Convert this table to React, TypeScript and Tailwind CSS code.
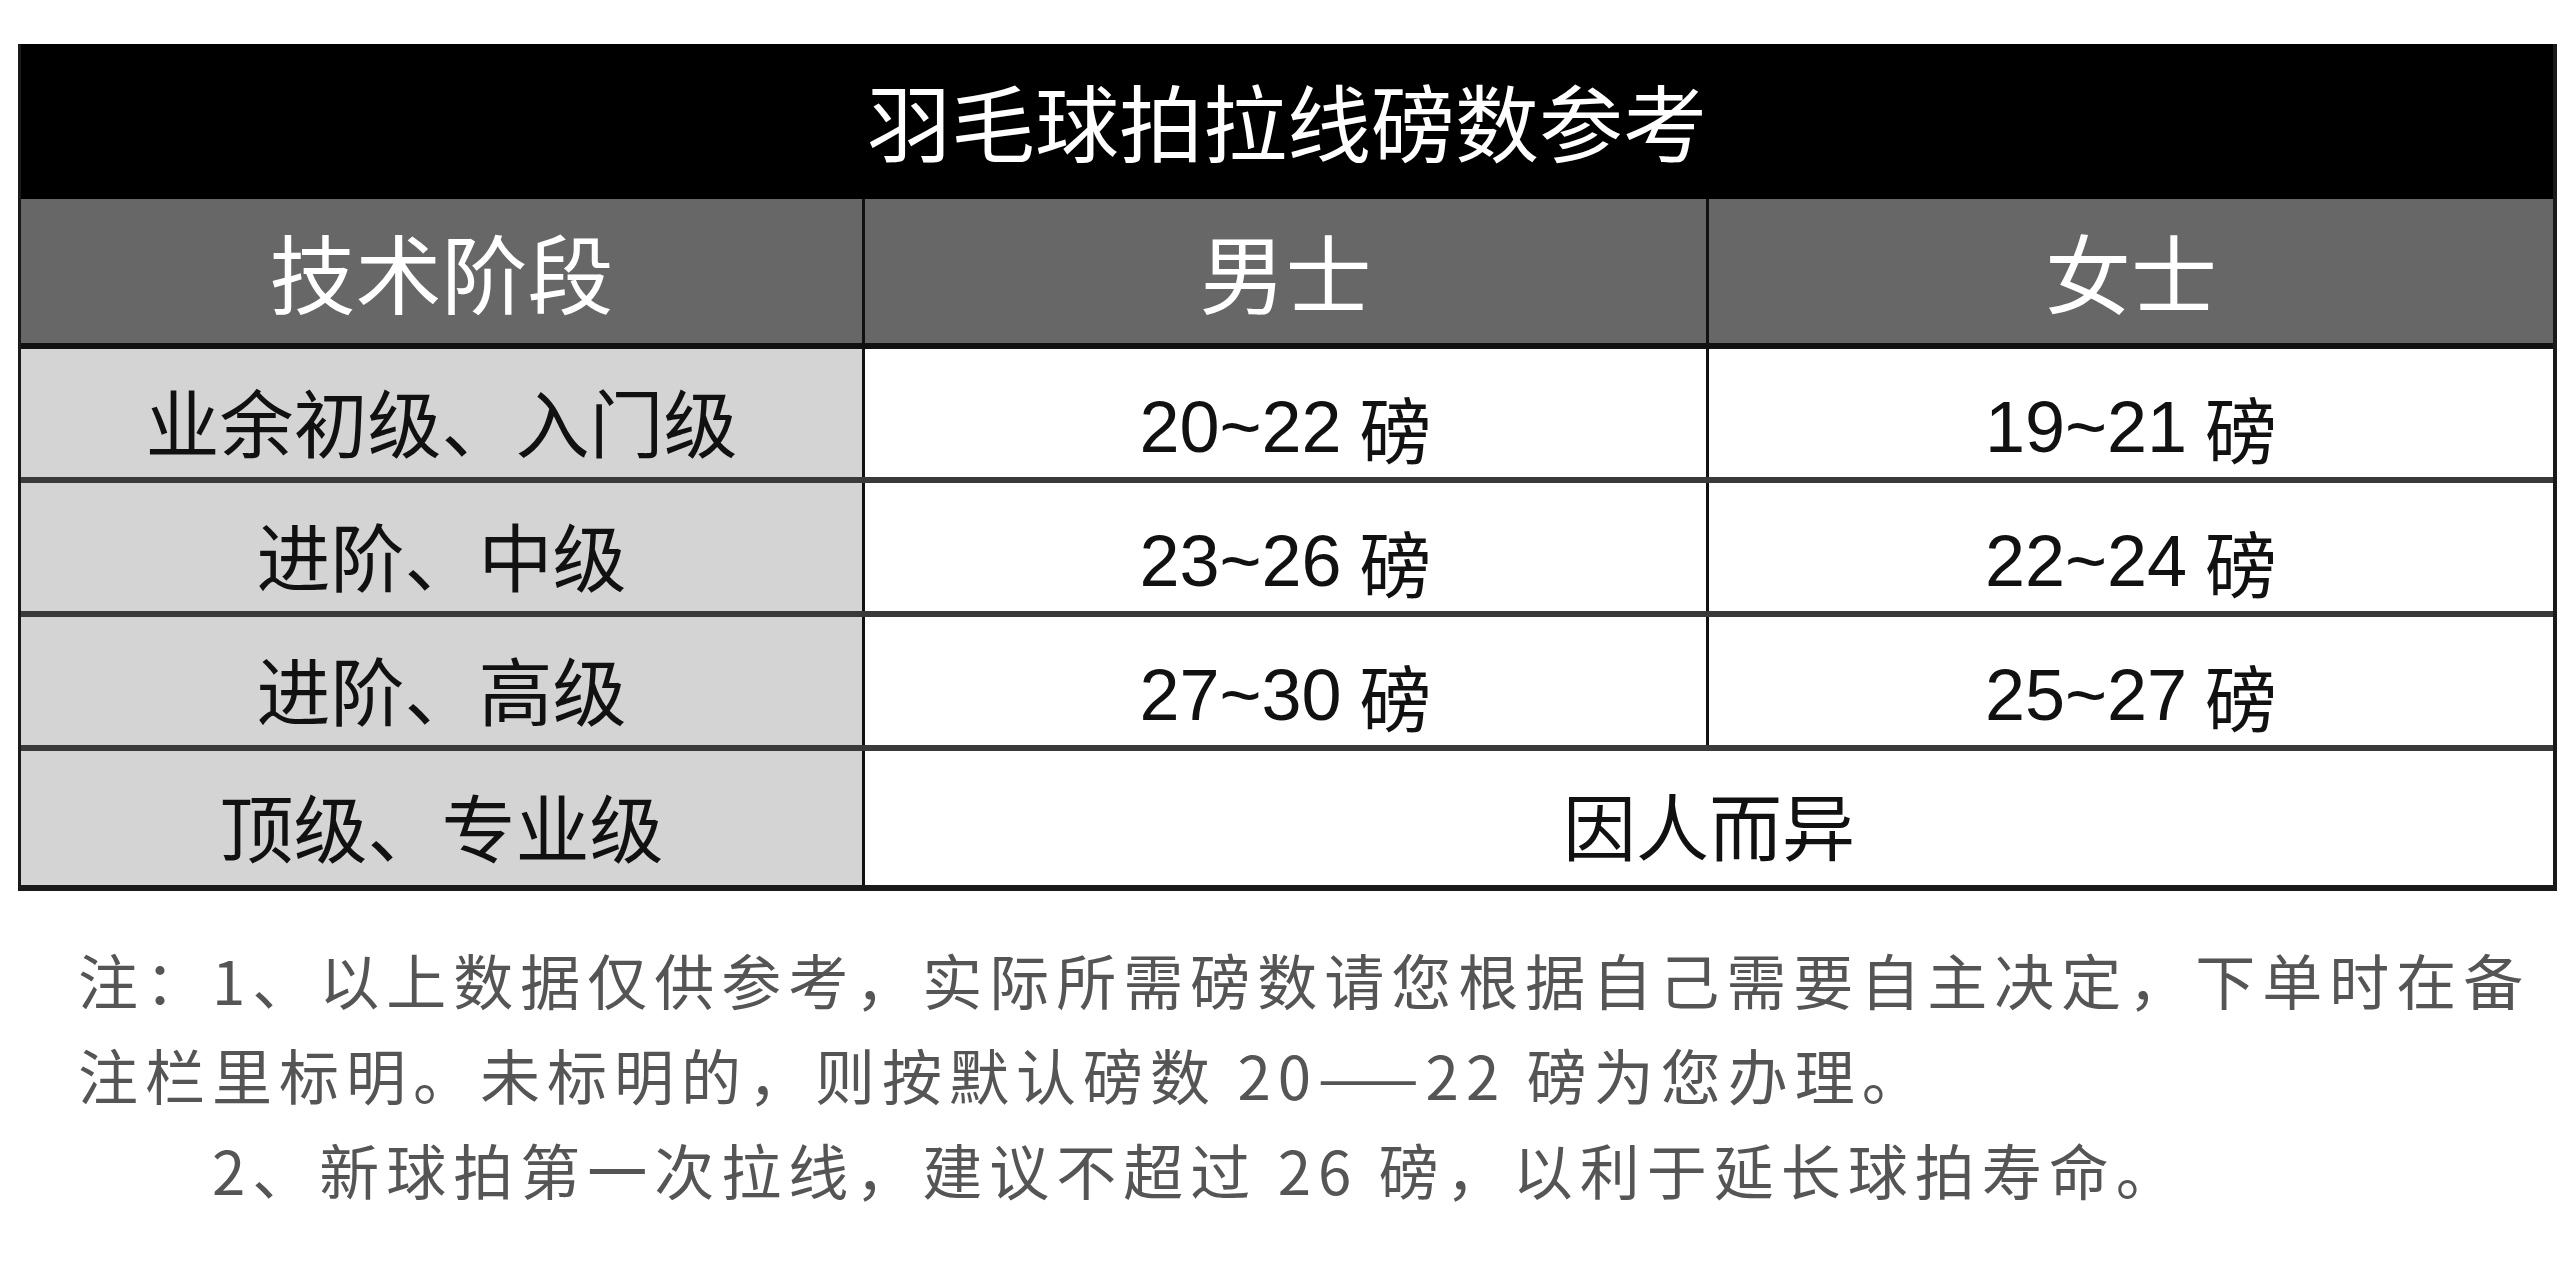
const CJK = "font-['Noto_Sans_CJK_SC',sans-serif]"

type Row = { stage: string; men?: string; women?: string; merged?: string }

const ROWS: Row[] = [
  { stage: "业余初级、入门级", men: "20~22", women: "19~21" },
  { stage: "进阶、中级", men: "23~26", women: "22~24" },
  { stage: "进阶、高级", men: "27~30", women: "25~27" },
  { stage: "顶级、专业级", merged: "因人而异" },
]

function Value({ range }: { range: string }) {
  return (
    <div className="flex items-center justify-center pt-[28px] text-[72px] leading-none text-[#111]">
      <span className="font-['Liberation_Sans','Noto_Sans_CJK_SC',sans-serif]">{range}</span>
      <span className={`${CJK} ml-[18px]`}>磅</span>
    </div>
  )
}

export default function App() {
  return (
    <div className={`${CJK} h-[1280px] w-[2560px] overflow-hidden bg-white pl-[18px] pr-[3px] pt-[44px]`}>
      <div className="border-b-[6px] border-l-[3px] border-r-[4px] border-[#1a1a1a]">
        {/* title */}
        <div className="flex h-[155px] items-center justify-center bg-black pb-[4px] text-[84px] leading-none text-white">
          羽毛球拍拉线磅数参考
        </div>

        {/* header */}
        <div className="grid h-[150px] grid-cols-3 border-b-[6px] border-[#111] bg-[#676767] text-[86px] leading-none text-white">
          <div className="flex items-center justify-center border-r-[3px] border-[#111]">技术阶段</div>
          <div className="flex items-center justify-center border-r-[3px] border-[#111]">男士</div>
          <div className="flex items-center justify-center">女士</div>
        </div>

        {ROWS.map((r, i) => (
          <div
            key={r.stage}
            className={`grid h-[134px] grid-cols-3 ${i < ROWS.length - 1 ? "border-b-[6px] border-[#3a3a3a]" : ""}`}
          >
            <div className="flex items-center justify-center border-r-[3px] border-[#111] bg-[#d4d4d4] pt-[14px] text-[74px] leading-none text-[#111]">
              {r.stage}
            </div>
            {r.merged ? (
              <div className="col-span-2 flex items-center justify-center pt-[10px] text-[73px] leading-none text-[#111]">
                {r.merged}
              </div>
            ) : (
              <>
                <div className="border-r-[3px] border-[#111]">
                  <div className="flex h-full items-center justify-center">
                    <Value range={r.men!} />
                  </div>
                </div>
                <div className="flex items-center justify-center">
                  <Value range={r.women!} />
                </div>
              </>
            )}
          </div>
        ))}
      </div>

      {/* notes */}
      <div className="mt-[40px] pl-[60px] text-[60px] leading-[95px] tracking-[7px] text-[#555]">
        <p>注：1、以上数据仅供参考，实际所需磅数请您根据自己需要自主决定，下单时在备</p>
        <p>注栏里标明。未标明的，则按默认磅数 20——22 磅为您办理。</p>
        <p className="pl-[134px]">2、新球拍第一次拉线，建议不超过 26 磅，以利于延长球拍寿命。</p>
      </div>
    </div>
  )
}
